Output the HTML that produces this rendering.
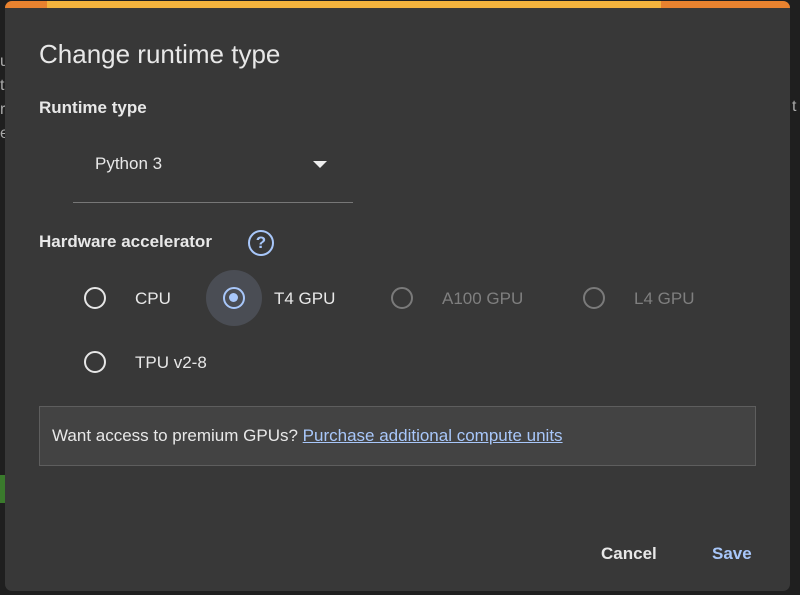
<html><head><style>
body{margin:0;width:800px;height:595px;background:#1f1f1f;overflow:hidden;font-family:"Liberation Sans",Arial,sans-serif;position:relative}
.dlg{position:absolute;left:5px;top:1px;width:785px;height:590px;background:#383838;border-radius:7px;overflow:hidden}
.bar{position:absolute;left:0;top:0;height:7px;width:100%;background:linear-gradient(90deg,#e8822f 0 42px,#f3b33d 42px 656px,#e8822f 656px)}
.t{position:absolute;color:#e8e8e8;white-space:nowrap}
.r{position:absolute;width:22px;height:22px;border:2.5px solid #e6e6e6;border-radius:50%;box-sizing:border-box}
</style></head><body>
<div class="t" style="left:0;top:50px;color:#aaa;font-size:16px;line-height:24px">u<br>t<br>r<br>e</div>
<div class="t" style="left:792px;top:98px;color:#aaa;font-size:16px">t</div>
<div style="position:absolute;left:0;top:475px;width:5px;height:28px;background:#3a7a2c"></div>
<div class="dlg">
<div class="bar"></div>
<div class="t" style="left:34px;top:38px;font-size:26px">Change runtime type</div>
<div class="t" style="left:34px;top:97px;font-size:17px;font-weight:bold">Runtime type</div>
<div class="t" style="left:90px;top:153px;font-size:17px">Python 3</div>
<div style="position:absolute;left:308px;top:160px;border-left:7px solid transparent;border-right:7px solid transparent;border-top:7px solid #eee"></div>
<div style="position:absolute;left:68px;top:201px;width:280px;height:1px;background:#777"></div>
<div class="t" style="left:34px;top:231px;font-size:17px;font-weight:bold">Hardware accelerator</div>
<div style="position:absolute;left:243px;top:229px;width:26px;height:26px;border:2px solid #a8c7fa;border-radius:50%;box-sizing:border-box;color:#a8c7fa;font-size:17px;font-weight:bold;text-align:center;line-height:22px">?</div>
<div class="r" style="left:79px;top:286px"></div>
<div class="t" style="left:130px;top:288px;font-size:17px">CPU</div>
<div style="position:absolute;left:201px;top:269px;width:56px;height:56px;border-radius:50%;background:#4a4d54"></div>
<div class="r" style="left:218px;top:286px;border-color:#a8c7fa"><div style="position:absolute;left:4px;top:4px;width:9px;height:9px;border-radius:50%;background:#a8c7fa"></div></div>
<div class="t" style="left:269px;top:288px;font-size:17px">T4 GPU</div>
<div class="r" style="left:386px;top:286px;border-color:#7a7a7a"></div>
<div class="t" style="left:437px;top:288px;font-size:17px;color:#7f7f7f">A100 GPU</div>
<div class="r" style="left:578px;top:286px;border-color:#7a7a7a"></div>
<div class="t" style="left:629px;top:288px;font-size:17px;color:#7f7f7f">L4 GPU</div>
<div class="r" style="left:79px;top:350px"></div>
<div class="t" style="left:130px;top:352px;font-size:17px">TPU v2-8</div>
<div style="position:absolute;left:34px;top:405px;width:717px;height:60px;background:#434343;border:1px solid #5e5e5e;box-sizing:border-box"></div>
<div class="t" style="left:47px;top:425px;font-size:17px">Want access to premium GPUs? <span style="color:#a8c7fa;text-decoration:underline">Purchase additional compute units</span></div>
<div class="t" style="left:596px;top:543px;font-size:17px;font-weight:bold">Cancel</div>
<div class="t" style="left:707px;top:543px;font-size:17px;font-weight:bold;color:#a8c7fa">Save</div>
</div>
</body></html>
